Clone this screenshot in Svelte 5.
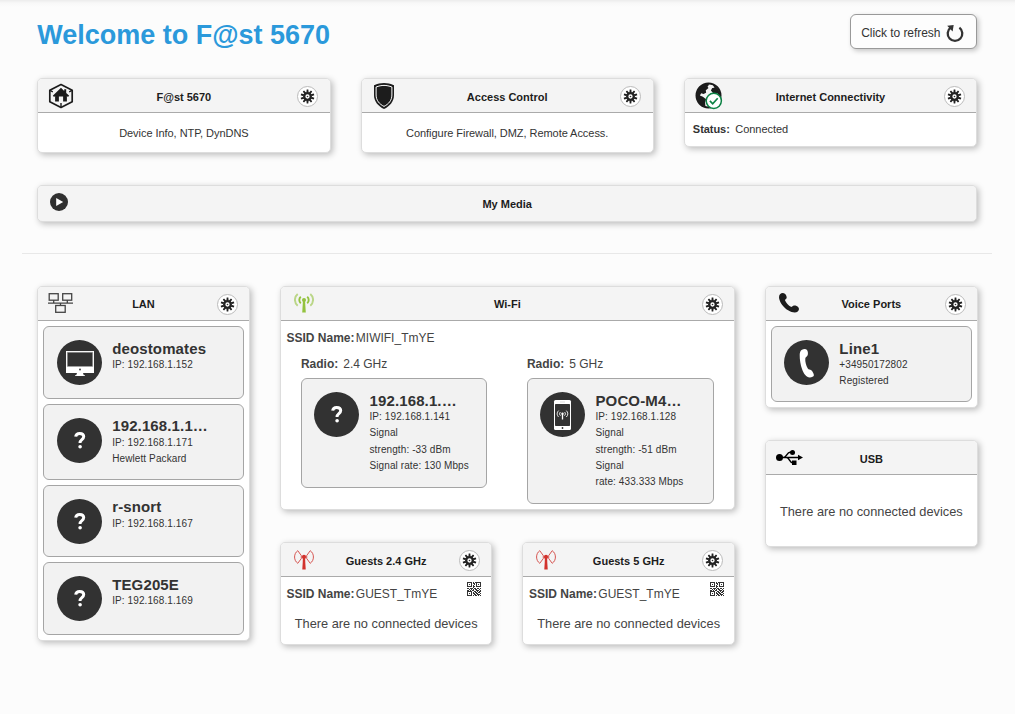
<script>
  const lan = [
    { name: 'deostomates', icon: 'desktop', lines: ['IP: 192.168.1.152'] },
    { name: '192.168.1.1…', icon: 'unknown', lines: ['IP: 192.168.1.171', 'Hewlett Packard'] },
    { name: 'r-snort', icon: 'unknown', lines: ['IP: 192.168.1.167'] },
    { name: 'TEG205E', icon: 'unknown', lines: ['IP: 192.168.1.169'] }
  ];
  const radios = [
    {
      band: '2.4 GHz',
      device: { name: '192.168.1.…', icon: 'unknown', lines: ['IP: 192.168.1.141', 'Signal', 'strength: -33 dBm', 'Signal rate: 130 Mbps'] }
    },
    {
      band: '5 GHz',
      device: { name: 'POCO-M4…', icon: 'mobile', lines: ['IP: 192.168.1.128', 'Signal', 'strength: -51 dBm', 'Signal', 'rate: 433.333 Mbps'] }
    }
  ];
  const line = { name: 'Line1', icon: 'phone', lines: ['+34950172802', 'Registered'] };
  const guests = ['Guests 2.4 GHz', 'Guests 5 GHz'];
  const qr = [
    '11111010111111',
    '10001011010001',
    '10101001010101',
    '10001010010001',
    '11111011011111',
    '00000010000000',
    '11011101101101',
    '00101010110010',
    '11010110011101',
    '11111001101011',
    '10001010110110',
    '10101011011001',
    '10001001101110',
    '11111010110101'
  ];
  const teeth = Array.from({ length: 10 }, (_, i) => i * 36);
</script>

{#snippet gear()}
  <span class="gear">
    <svg width="15" height="15" viewBox="0 0 15 15">
      <g fill="#222">
        {#each teeth as a}
          <path d="M6.700 .6h1.600l.3 3H6.400z" transform="rotate({a} 7.5 7.5)" />
        {/each}
      </g>
      <circle cx="7.5" cy="7.5" r="3.3" fill="#fff" stroke="#222" stroke-width="2.300" />
      <circle cx="7.5" cy="7.5" r="0.8" fill="#333" />
    </svg>
  </span>
{/snippet}

{#snippet icon(kind)}
  {#if kind === 'home'}
    <svg width="26" height="26" viewBox="0 0 26 26">
      <path d="M13 1.5 24.2 7.2v11.6L13 24.5 1.8 18.8V7.2z" fill="none" stroke="#1c1c1c" stroke-width="1.7" stroke-linejoin="round" />
      <path d="m2 7.4 2.8 1.4M24 7.4l-2.8 1.4M13 24.5V20" stroke="#1c1c1c" stroke-width="1.4" />
      <path d="M13 4.8 4.8 12.8l1.3 1.2 1-.9v5.4h3.8v-5h4.2v5h3.8v-5.4l1 .9 1.3-1.2-3-2.9V6.2h-2v1.7z" fill="#1c1c1c" />
    </svg>
  {:else if kind === 'shield'}
    <svg class="shield" width="20" height="26" viewBox="0 0 20 26">
      <path d="M10 0c3.1 0 6.8.8 10 2.300V12c0 6.600-4.200 11.300-10 14C4.200 23.300 0 18.600 0 12V2.300C3.200.8 6.900 0 10 0z" fill="#1c1c1c" />
      <path d="M10 2.400c2.500 0 5.400.6 7.900 1.600V12c0 5.300-3.300 9.200-7.900 11.400C5.400 21.200 2.100 17.300 2.100 12V4C4.600 3 7.500 2.400 10 2.400z" fill="none" stroke="#fff" stroke-width="1" />
    </svg>
  {:else if kind === 'globe'}
    <svg class="globe" width="28" height="28" viewBox="0 0 28 28">
      <circle cx="13.500" cy="13.500" r="12" fill="#f4f4f4" stroke="#1c1c1c" stroke-width="2" />
      <path d="M2 9C4 4.500 7.500 2 12 1.500l2.200 1-1.700 2.200 1 1.400-2.700 2.200.3 2.500-2.600 1.300-2.300-.8-1.300 2.300 3 1.200 3.200 2.500-1 3.200.4 5C5.500 23.600 1.300 19.500 1 13z" fill="#1c1c1c" />
      <path d="m17.500 2.500 2.700 1.400 3 3.400 2.300 5-1.300 2.700-1.500-3.400-4.300-.2-2.500-3 1.300-2.300 2.300-.4z" fill="#1c1c1c" />
      <circle cx="18.800" cy="18.800" r="7.600" fill="#fff" stroke="#0d8245" stroke-width="1.500" />
      <path d="m14.900 18.900 2.800 2.900 5-5.500" fill="none" stroke="#0d8245" stroke-width="1.700" />
    </svg>
  {:else if kind === 'play'}
    <svg class="play" width="18" height="18" viewBox="0 0 18 18">
      <circle cx="9" cy="9" r="9" fill="#303030" />
      <path d="m6.200 5 7 4-7 4z" fill="#fff" />
    </svg>
  {:else if kind === 'lan'}
    <svg class="lan" width="25" height="20" viewBox="0 0 25 20">
      <g fill="none" stroke="#444" stroke-width="1.300">
        <rect x="1.200" y=".7" width="9" height="6.500" /><rect x="14.700" y=".7" width="9" height="6.500" />
        <rect x="7.700" y="12.500" width="9.500" height="6.800" />
        <path d="M0 10.200h25M5.700 7v3M19.300 7v3M12.500 10v2.500" />
      </g>
    </svg>
  {:else if kind === 'wifi'}
    <svg class="wave" width="20" height="20" viewBox="0 0 20 20">
      <g fill="none" stroke="#93c23e">
        <path d="M6.800 3.800C4.800 5.500 4.800 8.500 6.800 10.300M13.200 3.800c2 1.700 2 4.700 0 6.500" stroke-width="1.900" />
        <path d="M3.700 1C0 4 0 9.500 3.700 12.700M16.300 1C20 4 20 9.500 16.300 12.700" stroke-width="1.900" opacity=".6" />
      </g>
      <circle cx="10" cy="6.900" r="2" fill="#93c23e" /><path d="M9 7h2l.8 12.500H8.200z" fill="#93c23e" />
    </svg>
  {:else if kind === 'guest'}
    <svg width="20" height="20" viewBox="0 0 20 20">
      <g fill="none" stroke="#d2443f" stroke-width=".9">
        <path d="M3.800.7C-.5 3.500-.5 10.500 3.800 13.300L7.300 8.500V5.600zM16.200.7C20.500 3.500 20.500 10.500 16.200 13.300L12.700 8.500V5.600z" />
      </g>
      <circle cx="10" cy="6.900" r="2.100" fill="#d2322d" /><path d="M9 7h2l.7 12.500H8.300z" fill="#d2322d" />
    </svg>
  {:else if kind === 'handset'}
    <svg class="handset" width="20" height="20" viewBox="0 0 20 20">
      <path d="M1 1.300C2.400-.2 4.500-.3 5.900.8c1.300 1.200 2 3 1.700 4.500L5.900 7.100c1 2.900 3.500 5.600 6.400 6.900l2-1.300c1.700-.4 3.900.2 5 1.500 1.100 1.400.8 3.200-.5 4.300-2 1.700-5.700 1.300-9.700-1.200C4.300 14.300.8 9.400.1 5.200-.1 3.700.1 2.200 1 1.300z" fill="#1c1c1c" />
    </svg>
  {:else if kind === 'usb'}
    <svg width="27" height="15" viewBox="0 0 27 15">
      <circle cx="3.500" cy="7.500" r="3.500" /><path d="m22 4.800 5 2.700-5 2.700z" />
      <path d="M3 7.500h20M7.500 7.500c3 0 3.500-5.200 6.500-5.200h2M10.500 7.500c3 0 3 5.200 6 5.200h1.500" fill="none" stroke="#000" stroke-width="1.500" />
      <circle cx="16.500" cy="2.500" r="2.500" /><rect x="16" y="10.500" width="4.500" height="4.500" />
    </svg>
  {/if}
{/snippet}

{#snippet head(title, kind, settings = true)}
  <header>
    <span class="slot">{@render icon(kind)}</span>
    <h2>{title}</h2>
    <span class="slot">{#if settings}{@render gear()}{/if}</span>
  </header>
{/snippet}

{#snippet device(d)}
  <div class="device" class:tall={d.lines.length > 1}>
    <svg class="avatar" width="45" height="45" viewBox="0 0 45 45">
      <circle cx="22.500" cy="22.500" r="22.500" fill="#323232" />
      {#if d.icon === 'desktop'}
        <path d="M9 11h28v22H9zM20 33h6l.8 2.300h1.200V36H18v-.7h1.200z" fill="#fff" />
        <path d="M10.300 12.300h25.400v14.200H10.300z" fill="#323232" stroke="#aaa" stroke-width=".5" />
        <circle cx="23" cy="29.500" r=".9" fill="#323232" />
      {:else if d.icon === 'mobile'}
        <rect x="14" y="8" width="17" height="30" rx="1.500" fill="#fff" />
        <rect x="15" y="12" width="15" height="22" rx=".7" fill="#323232" />
        <path d="M20 10h5" stroke="#ccc" stroke-width=".7" />
        <circle cx="22.500" cy="36" r=".9" fill="#323232" />
        <path d="M20.500 20c-1.200 1-1.200 2.700 0 3.700M24.500 20c1.200 1 1.200 2.700 0 3.700M18.700 18.600c-2 1.800-2 4.600 0 6.400M26.300 18.600c2 1.800 2 4.600 0 6.400" fill="none" stroke="#fff" stroke-width=".9" />
        <circle cx="22.500" cy="21.800" r="1.200" fill="#fff" /><path d="M22.500 22v5.500" stroke="#fff" stroke-width="1.300" />
      {:else if d.icon === 'phone'}
        <path d="M18 9.800c1.600-1 4-1 5 .1 1 1.300 1.300 4 .5 5.700-.6 1.300-2 1.600-2.200 3-.3 3 .8 7.200 2.500 9.900.8 1.300 2.300.7 3.500 1.700 1.300 1.100 2.600 3.600 2.600 5.100-.2 1.400-2.300 2.200-4.300 2.100-3.200-.2-5.800-3.100-7.500-8.100-1.500-4.300-2.500-9.700-2.400-14.300 0-2.600.7-4.200 2.300-5.200z" fill="#fff" />
      {:else}
        <path d="M18.700 18.700c.2-2.300 1.800-3.300 4-3.300 2.400 0 4 1.200 4 3.200 0 3.200-3.700 3-3.700 6.400" fill="none" stroke="#fff" stroke-width="3" />
        <circle cx="23.100" cy="28.700" r="1.800" fill="#fff" />
      {/if}
    </svg>
    <div class="info">
      <strong>{d.name}</strong>
      {#each d.lines as l}<span>{l}</span>{/each}
    </div>
  </div>
{/snippet}

<main>
  <div class="top">
    <h1>Welcome to F@st 5670</h1>
    <button>
      <span>Click to refresh</span>
      <svg width="18" height="18" viewBox="0 0 18 18">
        <path d="M4.600 3.700A7.300 7.300 0 1 0 13.400 3.700" fill="none" stroke="#333" stroke-width="2.300" />
        <path d="M1.200 1.700 7.700 1.100 6.600 7.500z" fill="#333" />
      </svg>
    </button>
  </div>

  <div class="summary">
    <section class="card">
      {@render head('F@st 5670', 'home')}
      <p class="about">Device Info, NTP, DynDNS</p>
    </section>
    <section class="card">
      {@render head('Access Control', 'shield')}
      <p class="about">Configure Firewall, DMZ, Remote Access.</p>
    </section>
    <section class="card">
      {@render head('Internet Connectivity', 'globe')}
      <p class="status"><b>Status:</b>Connected</p>
    </section>
  </div>

  <section class="card media">{@render head('My Media', 'play', false)}</section>
  <hr />

  <div class="network">
    <section class="card main-card">
      {@render head('LAN', 'lan')}
      <div class="list">
        {#each lan as d}{@render device(d)}{/each}
      </div>
    </section>

    <div class="middle">
      <section class="card main-card wifi">
        {@render head('Wi-Fi', 'wifi')}
        <p class="ssid"><b>SSID Name:</b> <span>MIWIFI_TmYE</span></p>
        <div class="radios">
          {#each radios as r}
            <div>
              <p class="radio"><b>Radio:</b>{r.band}</p>
              {@render device(r.device)}
            </div>
          {/each}
        </div>
      </section>
      <div class="guests">
        {#each guests as g}
          <section class="card guest">
            {@render head(g, 'guest')}
            <div class="ssid">
              <b>SSID Name:</b> <span>GUEST_TmYE</span>
              <svg class="qr" width="14" height="14" viewBox="0 0 14 14" shape-rendering="crispEdges">
                {#each qr as row, y}
                  {#each row as c, x}
                    {#if c === '1'}<rect {x} {y} width="1" height="1" fill="#333" />{/if}
                  {/each}
                {/each}
              </svg>
            </div>
            <p class="empty">There are no connected devices</p>
          </section>
        {/each}
      </div>
    </div>

    <div class="side">
      <section class="card main-card">
        {@render head('Voice Ports', 'handset')}
        <div class="list">{@render device(line)}</div>
      </section>
      <section class="card usb">
        {@render head('USB', 'usb', false)}
        <p class="empty">There are no connected devices</p>
      </section>
    </div>
  </div>
</main>

<style>
  :global(body) { background: #fcfcfc; }
  * { box-sizing: border-box; }
  main {
    height: 714px;
    padding: 14px 37.800px 0 37.200px;
    font-family: 'Liberation Sans', Arial, sans-serif;
    font-size: 11px;
    color: #333;
    background: linear-gradient(#ececec, #f8f8f8 3px, #fcfcfc 7px);
    overflow: hidden;
  }
  h1, h2, p { margin: 0; }
  svg { display: block; flex: none; }
  .top { display: flex; justify-content: space-between; height: 64px; }
  h1 { padding-top: 6px; font-size: 27px; line-height: 31px; color: #2b99db; }
  button {
    display: flex;
    align-items: center;
    gap: 5px;
    width: 127px;
    height: 35px;
    padding: 2px 0 0 10px;
    font: 12px 'Liberation Sans', Arial, sans-serif;
    color: #333;
    background: #fdfdfd;
    border: 1px solid #999;
    border-radius: 6px;
    box-shadow: 2px 2px 5px rgba(0, 0, 0, .22);
  }
  button span { white-space: nowrap; letter-spacing: -.05px; }
  button svg { margin-left: 1px; }
  .card {
    background: #fff;
    border: 1px solid #ddd;
    border-radius: 5px;
    box-shadow: 2px 2px 6px rgba(0, 0, 0, .25);
    overflow: hidden;
  }
  header {
    display: grid;
    grid-template-columns: 46px 1fr 46px;
    align-items: center;
    height: 34px;
    background: #f4f4f4;
    border-bottom: 1px solid #aaa;
  }
  h2 { padding-top: 3px; font-size: 11px; line-height: 14px; text-align: center; color: #1c1c1c; }
  .main-card h2 { padding-top: 1px; }
  .slot { display: flex; justify-content: center; }
  .gear {
    display: grid;
    place-items: center;
    width: 21px;
    height: 21px;
    margin: 2px 0 0 2px;
    background: #fff;
    border: 1px solid #bbb;
    border-radius: 50%;
  }
  .main-card .gear, .guest .gear { margin-left: 3px; }
  .summary { display: grid; grid-template-columns: repeat(3, 1fr); gap: 30px; align-items: start; height: 107px; }
  .about { height: 39px; padding-top: 1px; line-height: 39px; text-align: center; letter-spacing: -.05px; }
  .status { height: 33px; padding-left: 8px; line-height: 32px; letter-spacing: -.05px; }
  .status b { margin-right: 5.500px; }
  .media { height: 37px; background: #f4f4f4; }
  .media header { height: 33px; border: 0; }
  .play { margin: 0 4px 1px 0; }
  .shield { margin-right: 1.500px; }
  .globe { margin-left: 2px; margin-top: 1px; }
  .lan, .handset, .wave { margin-bottom: 1px; }
  .lan { margin-right: 1.500px; }
  hr { height: 1px; margin: 31px -15px 32px; border: 0; background: #e8e8e8; }
  .network { display: grid; grid-template-columns: 212.500px 455px 212.500px; gap: 30.200px; align-items: start; }
  .list { display: grid; gap: 5px; padding: 5px; }
  .device {
    display: flex;
    gap: 10px;
    min-height: 72.700px;
    padding: 13px 0 12.400px 13px;
    background: #f2f2f2;
    border: 1px solid #a5a5a5;
    border-radius: 6px;
  }
  .tall { min-height: 76px; }
  .list .tall { padding-bottom: 10px; }
  .side .device { padding-left: 12.300px; }
  .info { white-space: nowrap; }
  .list .info { margin-top: -.5px; }
  .info strong { display: block; font-size: 15px; line-height: 17px; letter-spacing: .13px; }
  .info span { display: block; font-size: 10px; line-height: 16.300px; letter-spacing: .1px; }
  .list .info strong { line-height: 17.600px; }
  .wifi { height: 224px; }
  .ssid { display: flex; padding: 9px 0 0 5.600px; font-size: 12px; line-height: 16px; color: #444; }
  .ssid span { margin-left: 1.300px; }
  .radios { display: grid; grid-template-columns: 186px 187px; gap: 40px; padding: 10px 0 0 20px; align-items: start; }
  .radio { margin-bottom: 6px; font-size: 12px; line-height: 16px; color: #444; }
  .radio b { margin-right: 5px; }
  .radios .device { padding-left: 12.600px; padding-bottom: 13px; }
  .guests { display: grid; grid-template-columns: 1fr 1fr; gap: 30px; margin-top: 32px; }
  .guest { height: 103px; }
  .qr { margin: -4px 10.200px 0 auto; }
  .empty { font-size: 12.800px; line-height: 16px; text-align: center; color: #444; }
  .guest .empty { margin-top: 14px; }
  .side { display: grid; gap: 32px; }
  .usb { height: 107px; }
  .usb .empty { margin-top: 29px; }
</style>
